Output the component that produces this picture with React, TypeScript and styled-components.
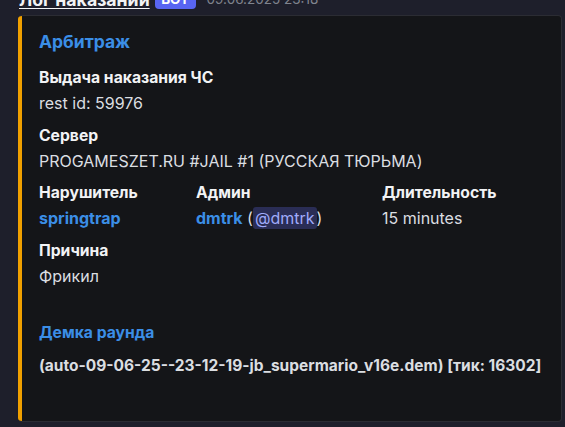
import React from "react";
import styled, { createGlobalStyle } from "styled-components";

const Global = createGlobalStyle`
  html, body { margin: 0; padding: 0; background: #1e1f2b; overflow: hidden; }
  body { font-family: Inter, "Noto Sans", sans-serif; color: #dbdee1; }
`;

const Page = styled.div`
  width: 565px;
  height: 427px;
  padding: 0 3px 0 18px;
  box-sizing: border-box;
  display: flex;
  flex-direction: column;
`;

const Header = styled.div`
  display: flex;
  align-items: center;
  gap: 5px;
  margin-top: -14px;
  height: 26px;
  padding-left: 1px;
  margin-bottom: 3px;
`;

const Author = styled.span`
  font-size: 17.7px;
  font-weight: 700;
  color: #f2f3f5;
  text-decoration: underline;
  text-underline-offset: 2px;
`;

const Badge = styled.span`
  background: #5865f2;
  color: #fff;
  font-size: 13.5px;
  font-weight: 700;
  border-radius: 4px;
  padding: 1px 6.5px;
  line-height: 18px;
`;

const Time = styled.span`
  font-size: 13.5px;
  color: #80848e;
  margin-left: 6px;
`;

const Embed = styled.div`
  display: flex;
  width: 544px;
  height: 407px;
  box-sizing: border-box;
  background: #141518;
  border: 1px solid #2b2c33;
  border-left: none;
  border-radius: 4px;
  overflow: hidden;
`;

const Bar = styled.div`
  width: 4px;
  flex: none;
  background: #f0a000;
`;

const Body = styled.div`
  flex: 1;
  padding: 14px 16px 16px 17px;
  display: flex;
  flex-direction: column;
`;

const Title = styled.div`
  font-size: 17.5px;
  font-weight: 700;
  color: #3b8ee6;
  line-height: 24px;
  margin-bottom: 13px;
`;

const Fields = styled.div`
  display: grid;
  grid-template-columns: 157px 186px 1fr;
  row-gap: 10.5px;
`;

const Field = styled.div<{ $full?: boolean }>`
  grid-column: ${(p) => (p.$full ? "1 / -1" : "auto")};
`;

const Name = styled.div<{ $blue?: boolean }>`
  font-size: 15.7px;
  font-weight: 700;
  color: ${(p) => (p.$blue ? "#3b8ee6" : "#f2f3f5")};
  line-height: 22px;
  margin-bottom: 3px;
`;

const Value = styled.div<{ $bold?: boolean }>`
  font-size: ${(p) => (p.$bold ? 15.5 : 16)}px;
  line-height: 22px;
  color: #dbdee1;
  font-weight: ${(p) => (p.$bold ? 700 : 400)};
`;

const Link = styled.span`
  color: #3b8ee6;
  font-weight: 700;
`;

const Mention = styled.span`
  background: #2a2d55;
  color: #a0abfb;
  border-radius: 3px;
  padding: 1px 2px;
  font-weight: 400;
`;

const Section = styled.div`
  margin-top: 35px;
`;

const DemoName = styled(Name)`
  margin-bottom: 11px;
`;

export default function App() {
  return (
    <>
      <Global />
      <Page>
        <Header>
          <Author>Лог наказаний</Author>
          <Badge>BOT</Badge>
          <Time>09.06.2025 23:18</Time>
        </Header>
        <Embed>
          <Bar />
          <Body>
            <Title>Арбитраж</Title>
            <Fields>
              <Field $full>
                <Name>Выдача наказания ЧС</Name>
                <Value>rest id: 59976</Value>
              </Field>
              <Field $full>
                <Name>Сервер</Name>
                <Value>PROGAMESZET.RU #JAIL #1 (РУССКАЯ ТЮРЬМА)</Value>
              </Field>
              <Field>
                <Name>Нарушитель</Name>
                <Value>
                  <Link>springtrap</Link>
                </Value>
              </Field>
              <Field>
                <Name>Админ</Name>
                <Value>
                  <Link>dmtrk</Link> (<Mention>@dmtrk</Mention>)
                </Value>
              </Field>
              <Field>
                <Name>Длительность</Name>
                <Value>15 minutes</Value>
              </Field>
              <Field $full>
                <Name>Причина</Name>
                <Value>Фрикил</Value>
              </Field>
            </Fields>
            <Section>
              <DemoName $blue>Демка раунда</DemoName>
              <Value $bold>(auto-09-06-25--23-12-19-jb_supermario_v16e.dem) [тик: 16302]</Value>
            </Section>
          </Body>
        </Embed>
      </Page>
    </>
  );
}
